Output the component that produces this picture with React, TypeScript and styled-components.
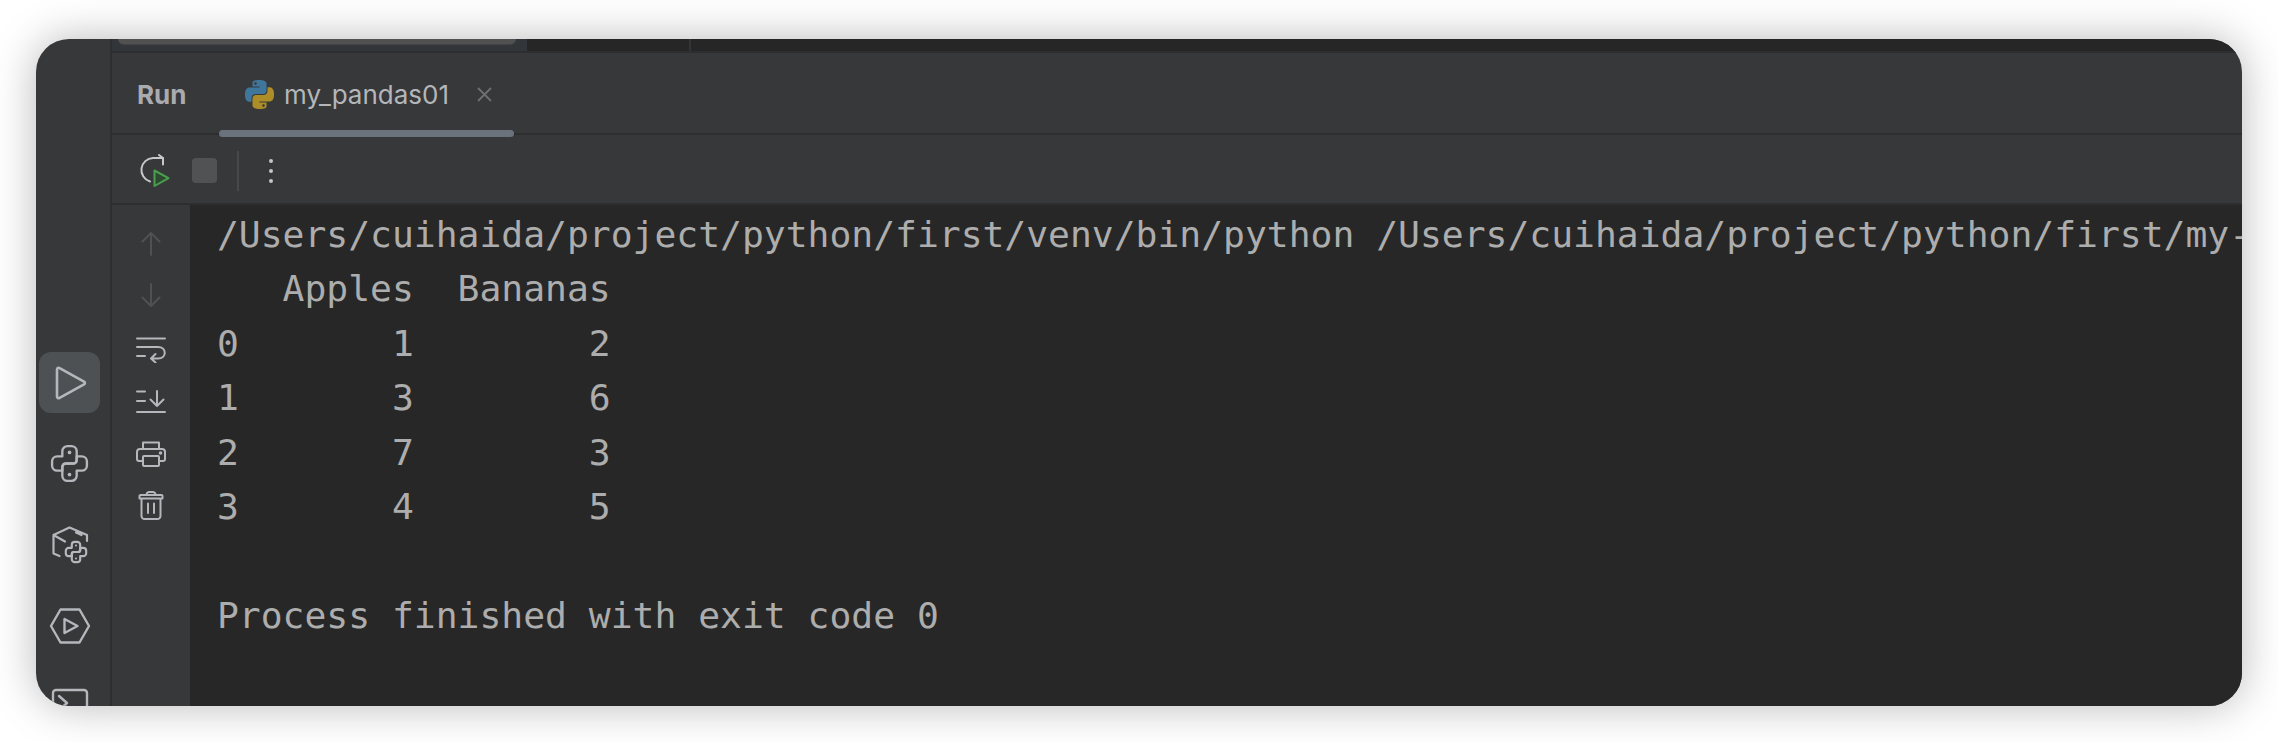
import React from "react";
import styled, { createGlobalStyle } from "styled-components";

const GlobalStyle = createGlobalStyle`
  html, body {
    margin: 0;
    background: #fff;
  }
`;

const Page = styled.div`
  width: 2278px;
  height: 742px;
  box-sizing: border-box;
  padding: 39px 36px 36px;
  overflow: hidden;
`;

const Win = styled.div`
  display: flex;
  height: 667px;
  border-radius: 33px;
  overflow: hidden;
  background: #37383a;
  box-shadow: 0 0 44px rgba(0, 0, 0, 0.28);
`;

const Rail = styled.div`
  width: 76px;
  flex: none;
  display: flex;
  flex-direction: column;
  align-items: flex-start;
  gap: 20px;
  padding: 313px 0 0 3px;
  box-sizing: border-box;
  border-right: 2px solid #2d2e30;
`;

const RailBtn = styled.div<{ $active?: boolean }>`
  width: 61px;
  height: 61px;
  flex: none;
  display: flex;
  align-items: center;
  justify-content: center;
  border-radius: 12px;
  background: ${(p) => (p.$active ? "#4e5154" : "transparent")};
  color: #b4b7bc;
`;

const Main = styled.div`
  flex: 1;
  min-width: 0;
  display: flex;
  flex-direction: column;
`;

const TopStrip = styled.div`
  height: 14px;
  flex: none;
  display: flex;
  box-sizing: border-box;
  background: #262626;
  border-bottom: 2px solid #2d2e30;
`;

const EditorScrap = styled.div`
  width: 415px;
  background: #32363a;
  padding: 0 11px 0 6px;
  box-sizing: border-box;
`;

const ScrapBar = styled.div`
  height: 6px;
  box-sizing: border-box;
  background: #515151;
  border-bottom: 1px solid #434345;
  border-radius: 0 0 8px 8px;
`;

const ScrapRule = styled.div`
  width: 162px;
  border-right: 2px solid #333437;
`;

const TabBar = styled.div`
  height: 82px;
  flex: none;
  display: flex;
  align-items: center;
  padding-left: 25px;
  box-sizing: border-box;
  border-bottom: 2px solid #2d2e30;
  font-family: Inter, "Liberation Sans", sans-serif;
  font-size: 26px;
`;

const RunLabel = styled.div`
  width: 82px;
  padding-top: 3px;
  font-weight: 700;
  color: #a9abaf;
`;

const Tab = styled.div`
  position: relative;
  height: 100%;
  width: 295px;
  display: flex;
  align-items: center;
  gap: 10px;
  padding: 3px 0 0 26px;
  box-sizing: border-box;
  color: #b4b6ba;
  &::after {
    content: "";
    position: absolute;
    left: 0;
    right: 0;
    bottom: -4px;
    height: 7px;
    border-radius: 4px;
    background: #6a737c;
  }
`;

const TabClose = styled.svg`
  margin-left: 18px;
`;

const Toolbar = styled.div`
  height: 70px;
  flex: none;
  display: flex;
  align-items: center;
  padding: 3px 0 0 27px;
  box-sizing: border-box;
  border-bottom: 2px solid #2d2e30;
`;

const StopBtn = styled.div`
  width: 25px;
  height: 25px;
  margin-left: 21px;
  border-radius: 4px;
  background: #515253;
`;

const ToolSep = styled.div`
  width: 2px;
  height: 40px;
  margin-left: 20px;
  background: #47494c;
`;

const Dots = styled.div`
  display: flex;
  flex-direction: column;
  gap: 6px;
  margin-left: 30px;
`;

const Dot = styled.span`
  width: 4px;
  height: 4px;
  border-radius: 50%;
  background: #c4c6ca;
`;

const Body = styled.div`
  flex: 1;
  min-height: 0;
  display: flex;
`;

const Gutter = styled.div`
  width: 78px;
  flex: none;
  display: flex;
  flex-direction: column;
  align-items: center;
  padding-top: 27px;
  box-sizing: border-box;
`;

const GutterIcon = styled.svg<{ $muted?: boolean; $top?: number }>`
  flex: none;
  margin-top: ${(p) => p.$top ?? 0}px;
  color: ${(p) => (p.$muted ? "#4f5154" : "#b4b7bc")};
`;

const Console = styled.pre`
  flex: 1;
  min-width: 0;
  margin: 0;
  padding: 3px 0 0 27px;
  overflow: hidden;
  background: #272727;
  font-family: "DejaVu Sans Mono", "Liberation Mono", monospace;
  font-size: 36.35px;
  line-height: 54.4px;
  color: #adadad;
`;

const s = { fill: "none", stroke: "currentColor", strokeLinecap: "round", strokeLinejoin: "round" } as const;

const PY_HALF = "M13.5 8.5V4A2.5 2.5 0 0 0 11 1.5H9A2.5 2.5 0 0 0 6.5 4V6.5H4A2.5 2.5 0 0 0 1.5 9V11A2.5 2.5 0 0 0 4 13.5H6.5V12A2 2 0 0 1 8.5 10H12A1.5 1.5 0 0 0 13.5 8.5Z";

function PythonOutline({ size, width }: { size: number; width: number }) {
  return (
    <svg width={size} height={size} viewBox="0 0 20 20" {...s} strokeWidth={width}>
      <path d={PY_HALF} />
      <path d={PY_HALF} transform="rotate(180 10 10)" />
      <circle cx="10" cy="4.6" r="0.9" fill="currentColor" stroke="none" />
      <circle cx="10" cy="15.4" r="0.9" fill="currentColor" stroke="none" />
    </svg>
  );
}

function PythonColor() {
  return (
    <svg width="29" height="29" viewBox="0 0 24 24">
      <path
        fill="#3f769c"
        d="M14.25.18l.9.2.73.26.59.3.45.32.34.34.25.34.16.33.1.3.04.26.02.2-.01.13V8.5l-.05.63-.13.55-.21.46-.26.38-.3.31-.33.25-.35.19-.35.14-.33.1-.3.07-.26.04-.21.02H8.77l-.69.05-.59.14-.5.22-.41.27-.33.32-.27.35-.2.36-.15.37-.1.35-.07.32-.04.27-.02.21v3.06H3.17l-.21-.03-.28-.07-.32-.12-.35-.18-.36-.26-.36-.36-.35-.46-.32-.59-.28-.73-.21-.88-.14-1.05-.05-1.23.06-1.22.16-1.04.24-.87.32-.71.36-.57.4-.44.42-.33.42-.24.4-.16.36-.1.32-.05.24-.01h.16l.06.01h8.16v-.83H6.18l-.01-2.75-.02-.37.05-.34.11-.31.17-.28.25-.26.31-.23.38-.2.44-.18.51-.15.58-.12.64-.1.71-.06.77-.04.84-.02 1.27.05zm-6.3 1.98l-.23.33-.08.41.08.41.23.34.33.22.41.09.41-.09.33-.22.23-.34.08-.41-.08-.41-.23-.33-.33-.22-.41-.09-.41.09z"
      />
      <path
        fill="#ad8d27"
        d="M21.04 6.11l.28.06.32.12.35.18.36.27.36.35.35.47.32.59.28.73.21.88.14 1.04.05 1.23-.06 1.23-.16 1.04-.24.86-.32.71-.36.57-.4.45-.42.33-.42.24-.4.16-.36.09-.32.05-.24.02-.16-.01h-8.22v.82h5.84l.01 2.76.02.36-.05.34-.11.31-.17.29-.25.25-.31.24-.38.2-.44.17-.51.15-.58.13-.64.09-.71.07-.77.04-.84.01-1.27-.04-1.07-.14-.9-.2-.73-.25-.59-.3-.45-.33-.34-.34-.25-.34-.16-.33-.1-.3-.04-.25-.02-.2.01-.13v-5.34l.05-.64.13-.54.21-.46.26-.38.3-.32.33-.24.35-.2.35-.14.33-.1.3-.06.26-.04.21-.02.13-.01h5.84l.69-.05.59-.14.5-.21.41-.28.33-.32.27-.35.2-.36.15-.36.1-.35.07-.32.04-.28.02-.21V6.07h2.09l.14.01zm-6.47 14.25l-.23.33-.08.41.08.41.23.33.33.23.41.08.41-.08.33-.23.23-.33.08-.41-.08-.41-.23-.33-.33-.23-.41-.08-.41.08z"
      />
    </svg>
  );
}

function PackageIcon() {
  return (
    <svg width="40" height="42" viewBox="0 0 40 42" {...s} strokeWidth="2.2">
      <path d="M9.5 32L3.5 29.5V11L19.5 3.5L37 11V17M3.5 11L15 17.5M26 8.5L31.5 11" />
      <g transform="translate(14 16) scale(1.2)" strokeWidth="1.8">
        <path d={PY_HALF} />
        <path d={PY_HALF} transform="rotate(180 10 10)" />
        <circle cx="10" cy="4.6" r="0.9" fill="currentColor" stroke="none" />
        <circle cx="10" cy="15.4" r="0.9" fill="currentColor" stroke="none" />
      </g>
    </svg>
  );
}

export default function App() {
  return (
    <Page>
      <GlobalStyle />
      <Win>
        <Rail>
          <RailBtn $active>
            <svg width="34" height="36" viewBox="0 0 34 36" {...s} strokeWidth="2.6">
              <path d="M4 4.5C4 3 5.5 2.5 6.6 3.2L31 16.6C32.2 17.3 32.2 18.7 31 19.4L6.6 32.8C5.5 33.5 4 33 4 31.5Z" />
            </svg>
          </RailBtn>
          <RailBtn>
            <PythonOutline size={41} width={1.15} />
          </RailBtn>
          <RailBtn>
            <PackageIcon />
          </RailBtn>
          <RailBtn>
            <svg width="42" height="38" viewBox="0 0 42 38" {...s} strokeWidth="2.4">
              <path d="M2 19L11.5 2.5H30.5L40 19L30.5 35.5H11.5Z" />
              <path d="M15.5 12V26L28.5 19Z" />
            </svg>
          </RailBtn>
          <RailBtn>
            <svg width="38" height="38" viewBox="0 0 38 38" {...s} strokeWidth="2.4">
              <rect x="2" y="2" width="34" height="34" rx="3" />
              <path d="M8 8L16 15L8 22" />
            </svg>
          </RailBtn>
        </Rail>
        <Main>
          <TopStrip>
            <EditorScrap>
              <ScrapBar />
            </EditorScrap>
            <ScrapRule />
          </TopStrip>
          <TabBar>
            <RunLabel>Run</RunLabel>
            <Tab>
              <PythonColor />
              my_pandas01
              <TabClose width="15" height="15" viewBox="0 0 15 15" fill="none" stroke="#6d6f73" strokeWidth="1.8">
                <path d="M1 1L14 14M14 1L1 14" />
              </TabClose>
            </Tab>
          </TabBar>
          <Toolbar>
            <svg width="32" height="34" viewBox="0 0 32 34" {...s} strokeWidth="2">
              <path d="M11 27.5A12 12 0 0 1 14 4H24" stroke="#c6c8cc" />
              <path d="M24 10.5V4L20 1" stroke="#c6c8cc" />
              <path d="M15.5 16.5V32L29.5 24.2Z" stroke="#4a9f4e" fill="#2d4a30" />
            </svg>
            <StopBtn />
            <ToolSep />
            <Dots>
              <Dot />
              <Dot />
              <Dot />
            </Dots>
          </Toolbar>
          <Body>
            <Gutter>
              <GutterIcon $muted width="20" height="24" viewBox="0 0 20 24" {...s} strokeWidth="2">
                <path d="M10 23V1M1.5 9.5L10 1L18.5 9.5" />
              </GutterIcon>
              <GutterIcon $muted $top={27} width="20" height="24" viewBox="0 0 20 24" {...s} strokeWidth="2">
                <path d="M10 1V23M1.5 14.5L10 23L18.5 14.5" />
              </GutterIcon>
              <GutterIcon $top={30} width="30" height="26" viewBox="0 0 30 26" {...s} strokeWidth="2">
                <path d="M1 1.5H29M1 10H22C31 10 31 21.5 22 21.5H15M19.5 17L15 21.5L19.5 25.5M1 19H9" />
              </GutterIcon>
              <GutterIcon $top={27} width="30" height="23" viewBox="0 0 30 23" {...s} strokeWidth="2">
                <path d="M1 22H29M1 1.5H9M1 11H9M21 1V16M14.5 9.5L21 16L27.5 9.5" />
              </GutterIcon>
              <GutterIcon $top={28} width="30" height="26" viewBox="0 0 30 26" {...s} strokeWidth="2">
                <path d="M7 8V1.5H23V8M7 20H3A2 2 0 0 1 1 18V11A3 3 0 0 1 4 8H26A3 3 0 0 1 29 11V18A2 2 0 0 1 27 20H23" />
                <rect x="7" y="15" width="16" height="10" rx="1" />
                <circle cx="24.5" cy="12" r="0.8" fill="currentColor" />
              </GutterIcon>
              <GutterIcon $top={24} width="26" height="29" viewBox="0 0 26 29" {...s} strokeWidth="2">
                <path d="M1.5 7.5V5A1 1 0 0 1 2.5 4H23.5A1 1 0 0 1 24.5 5V7.5ZM8.5 4C8.5 2 10 1 11 1H15C16 1 17.5 2 17.5 4M3.5 7.5V25A3 3 0 0 0 6.5 28H19.5A3 3 0 0 0 22.5 25V7.5M10 12.5V22M16 12.5V22" />
              </GutterIcon>
            </Gutter>
            <Console>{`/Users/cuihaida/project/python/first/venv/bin/python /Users/cuihaida/project/python/first/my-pandas01.py
   Apples  Bananas
0       1        2
1       3        6
2       7        3
3       4        5

Process finished with exit code 0`}</Console>
          </Body>
        </Main>
      </Win>
    </Page>
  );
}
